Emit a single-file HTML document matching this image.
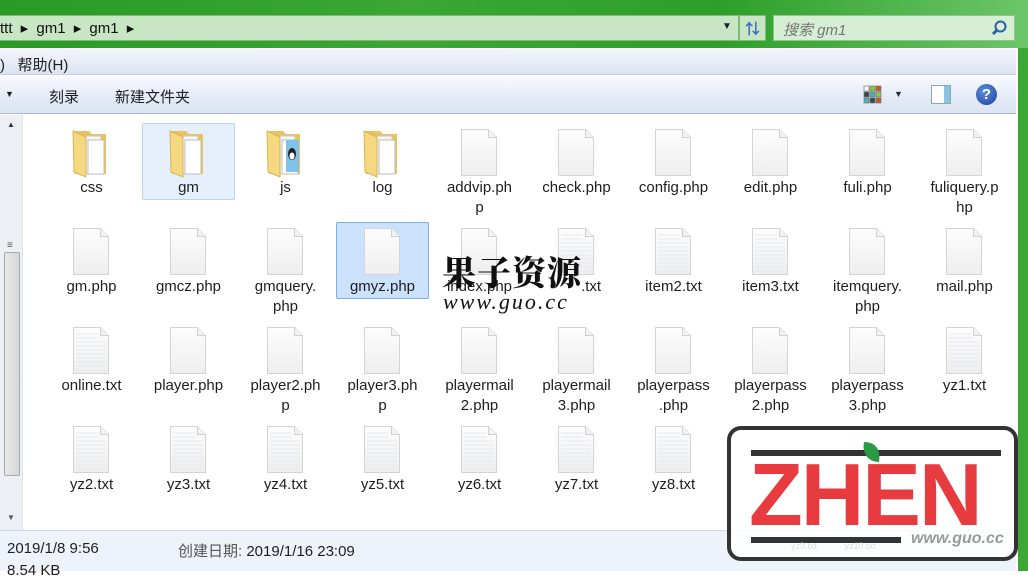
<!DOCTYPE html>
<html><head><meta charset="utf-8"><style>
*{margin:0;padding:0;box-sizing:border-box}
body{width:1028px;height:571px;overflow:hidden;position:relative;background:#fff;font-family:"Liberation Sans","Noto Sans CJK SC",sans-serif;font-size:15px;color:#1e1e1e}
.abs{position:absolute}
#top{left:0;top:0;width:1028px;height:48px;background:linear-gradient(90deg,#2a9a25,#3aa833 40%,#2d9f28 70%,#6cc56a)}
#addr{left:0;top:15px;width:739px;height:26px;background:#c8e6c4;border:1px solid #7fb97a;border-left:none}
#ref{left:739px;top:15px;width:27px;height:26px;background:#c8e6c4;border:1px solid #7fb97a}
#search{left:773px;top:15px;width:242px;height:26px;background:#d6eed3;border:1px solid #8fc48a;color:#777;font-style:italic;font-size:15px;padding:3px 9px}
#rgreen{left:1018px;top:48px;width:10px;height:523px;background:#3aa833}
#menu{left:0;top:49px;width:1016px;height:26px;background:linear-gradient(#f2f5fb,#dde4f2);border-bottom:1px solid #c5cfe2}
#tool{left:0;top:76px;width:1016px;height:38px;background:linear-gradient(#f8faff,#e6ecf7 50%,#dce5f3);border-bottom:1px solid #a8b8d0}
#sb{left:0;top:115px;width:23px;height:415px;background:#eceff3;border-right:1px solid #dfe3ea}
#thumb{left:4px;top:137px;width:16px;height:224px;background:linear-gradient(90deg,#e8e8e8,#d6d6d6);border:1px solid #a8a8a8;border-radius:2px}
#status{left:0;top:530px;width:1016px;height:41px;background:#eef3fb;border-top:1px solid #c9d6ea;font-size:15px}
.cell{position:absolute;width:97px;height:99px;text-align:center}
.cell svg{position:absolute;left:27px;top:6px}
.lbl{position:absolute;left:0;top:56px;width:97px;line-height:20px}
.sel{position:absolute;left:2px;top:1px;width:93px;height:77px;background:#e6f0fc;border:1px solid #b8d4f3;border-radius:2px}
.sel2{background:#cce1fb;border-color:#7fb0ea}
</style></head><body>
<svg width="0" height="0" style="position:absolute">
<defs>
<linearGradient id="pg" x1="0" y1="0" x2="0" y2="1"><stop offset="0" stop-color="#fdfdfd"/><stop offset="1" stop-color="#eeeeee"/></linearGradient>
<symbol id="doc" viewBox="0 0 42 50"><path d="M3.5 1.5h27l8 8v38h-35z" fill="url(#pg)" stroke="#d4d4d4"/><path d="M30.5 1.5v8h8" fill="#f2f2f2" stroke="#d0d0d0"/></symbol>
<symbol id="txt" viewBox="0 0 42 50"><path d="M3.5 1.5h27l8 8v38h-35z" fill="url(#pg)" stroke="#d4d4d4"/><path d="M30.5 1.5v8h8" fill="#f2f2f2" stroke="#d0d0d0"/><g stroke="#e6e8ec"><path d="M6 8h22M6 12h22M6 16h30M6 20h30M6 24h30M6 28h30M6 32h30M6 36h30M6 40h30M6 44h30"/></g></symbol>
<symbol id="fold" viewBox="0 0 42 50"><path d="M5 3h14l3 3h14v40H5z" fill="#e9c35c"/><path d="M13 8h18v38H13z" fill="#f6f6f6" stroke="#c8c8c8"/><path d="M18 12h16v34H18z" fill="#fff" stroke="#bcbcbc"/><path d="M3 3l13 6v40L4 44z" fill="#f5d880" stroke="#d8b552"/></symbol>
</defs></svg>
<div id="top" class="abs"></div>
<div id="addr" class="abs"><span class="abs" style="left:0;top:3px;font-size:15px;color:#111;word-spacing:4px">ttt &#9656; gm1 &#9656; gm1 &#9656;</span><span class="abs" style="left:722px;top:5px;font-size:10px;color:#123">&#9660;</span></div>
<div id="ref" class="abs"><span class="abs" style="left:5px;top:2px;color:#3a6fc0;font-size:15px;font-weight:bold">&#8645;</span></div>
<div id="search" class="abs">搜索 gm1<svg class="abs" style="left:217px;top:4px" width="16" height="16"><circle cx="9.5" cy="6.5" r="5" fill="none" stroke="#2d5ea8" stroke-width="2"/><path d="M6 10l-4 4" stroke="#2d5ea8" stroke-width="3"/></svg></div>
<div id="rgreen" class="abs"></div>
<div id="menu" class="abs"><span class="abs" style="left:0;top:5px">)&nbsp;&nbsp; 帮助(H)</span></div>
<div id="tool" class="abs"><span class="abs" style="left:5px;top:13px;font-size:9px">&#9660;</span><span class="abs" style="left:49px;top:10px">刻录</span><span class="abs" style="left:115px;top:10px">新建文件夹</span>
<svg class="abs" style="left:863px;top:9px" width="20" height="20"><g fill="#fff" stroke="#777" stroke-width=".7"><rect x="1" y="1" width="5" height="5"/><rect x="7" y="1" width="5" height="5" fill="#8c4"/><rect x="13" y="1" width="5" height="5" fill="#c52"/><rect x="1" y="7" width="5" height="5" fill="#345"/><rect x="7" y="7" width="5" height="5" fill="#5ab"/><rect x="13" y="7" width="5" height="5" fill="#8c4"/><rect x="1" y="13" width="5" height="5" fill="#5ab"/><rect x="7" y="13" width="5" height="5" fill="#345"/><rect x="13" y="13" width="5" height="5" fill="#c52"/></g></svg>
<span class="abs" style="left:894px;top:13px;font-size:9px;color:#234">&#9660;</span>
<div class="abs" style="left:931px;top:9px;width:20px;height:19px;background:#fff;border:1px solid #8aa"><div class="abs" style="right:0;top:0;width:6px;height:17px;background:#8cc3e0"></div></div>
<div class="abs" style="left:976px;top:8px;width:21px;height:21px;border-radius:50%;background:radial-gradient(circle at 40% 35%,#5b8fe0,#1c3f99);color:#fff;font-weight:bold;font-size:15px;text-align:center;line-height:21px">?</div></div>
<div id="sb" class="abs"><span class="abs" style="left:7px;top:5px;font-size:8px;color:#333">&#9650;</span><div id="thumb" class="abs"></div><span class="abs" style="left:7px;top:125px;font-size:10px;color:#555">&#8801;</span><span class="abs" style="left:7px;top:398px;font-size:8px;color:#555">&#9660;</span></div>

<div class="cell" style="left:43px;top:122px"><svg width="42" height="50"><use href="#fold"/></svg><div class="lbl">css</div></div>
<div class="cell" style="left:140px;top:122px"><div class="sel"></div><svg width="42" height="50"><use href="#fold"/></svg><div class="lbl">gm</div></div>
<div class="cell" style="left:237px;top:122px"><svg width="42" height="50"><use href="#fold"/><rect x="22" y="12" width="13" height="32" fill="#7fc3ea"/><ellipse cx="28" cy="26" rx="4" ry="6" fill="#222"/><ellipse cx="28" cy="28" rx="2.5" ry="3.5" fill="#fff"/></svg><div class="lbl">js</div></div>
<div class="cell" style="left:334px;top:122px"><svg width="42" height="50"><use href="#fold"/></svg><div class="lbl">log</div></div>
<div class="cell" style="left:431px;top:122px"><svg width="42" height="50"><use href="#doc"/></svg><div class="lbl">addvip.ph<br>p</div></div>
<div class="cell" style="left:528px;top:122px"><svg width="42" height="50"><use href="#doc"/></svg><div class="lbl">check.php</div></div>
<div class="cell" style="left:625px;top:122px"><svg width="42" height="50"><use href="#doc"/></svg><div class="lbl">config.php</div></div>
<div class="cell" style="left:722px;top:122px"><svg width="42" height="50"><use href="#doc"/></svg><div class="lbl">edit.php</div></div>
<div class="cell" style="left:819px;top:122px"><svg width="42" height="50"><use href="#doc"/></svg><div class="lbl">fuli.php</div></div>
<div class="cell" style="left:916px;top:122px"><svg width="42" height="50"><use href="#doc"/></svg><div class="lbl">fuliquery.p<br>hp</div></div>

<div class="cell" style="left:43px;top:221px"><svg width="42" height="50"><use href="#doc"/></svg><div class="lbl">gm.php</div></div>
<div class="cell" style="left:140px;top:221px"><svg width="42" height="50"><use href="#doc"/></svg><div class="lbl">gmcz.php</div></div>
<div class="cell" style="left:237px;top:221px"><svg width="42" height="50"><use href="#doc"/></svg><div class="lbl">gmquery.<br>php</div></div>
<div class="cell" style="left:334px;top:221px"><div class="sel sel2"></div><svg width="42" height="50"><use href="#doc"/></svg><div class="lbl">gmyz.php</div></div>
<div class="cell" style="left:431px;top:221px"><svg width="42" height="50"><use href="#doc"/></svg><div class="lbl">index.php</div></div>
<div class="cell" style="left:528px;top:221px"><svg width="42" height="50"><use href="#txt"/></svg><div class="lbl">&nbsp;&nbsp;&nbsp;&nbsp;&nbsp;&nbsp;&nbsp;.txt</div></div>
<div class="cell" style="left:625px;top:221px"><svg width="42" height="50"><use href="#txt"/></svg><div class="lbl">item2.txt</div></div>
<div class="cell" style="left:722px;top:221px"><svg width="42" height="50"><use href="#txt"/></svg><div class="lbl">item3.txt</div></div>
<div class="cell" style="left:819px;top:221px"><svg width="42" height="50"><use href="#doc"/></svg><div class="lbl">itemquery.<br>php</div></div>
<div class="cell" style="left:916px;top:221px"><svg width="42" height="50"><use href="#doc"/></svg><div class="lbl">mail.php</div></div>

<div class="cell" style="left:43px;top:320px"><svg width="42" height="50"><use href="#txt"/></svg><div class="lbl">online.txt</div></div>
<div class="cell" style="left:140px;top:320px"><svg width="42" height="50"><use href="#doc"/></svg><div class="lbl">player.php</div></div>
<div class="cell" style="left:237px;top:320px"><svg width="42" height="50"><use href="#doc"/></svg><div class="lbl">player2.ph<br>p</div></div>
<div class="cell" style="left:334px;top:320px"><svg width="42" height="50"><use href="#doc"/></svg><div class="lbl">player3.ph<br>p</div></div>
<div class="cell" style="left:431px;top:320px"><svg width="42" height="50"><use href="#doc"/></svg><div class="lbl">playermail<br>2.php</div></div>
<div class="cell" style="left:528px;top:320px"><svg width="42" height="50"><use href="#doc"/></svg><div class="lbl">playermail<br>3.php</div></div>
<div class="cell" style="left:625px;top:320px"><svg width="42" height="50"><use href="#doc"/></svg><div class="lbl">playerpass<br>.php</div></div>
<div class="cell" style="left:722px;top:320px"><svg width="42" height="50"><use href="#doc"/></svg><div class="lbl">playerpass<br>2.php</div></div>
<div class="cell" style="left:819px;top:320px"><svg width="42" height="50"><use href="#doc"/></svg><div class="lbl">playerpass<br>3.php</div></div>
<div class="cell" style="left:916px;top:320px"><svg width="42" height="50"><use href="#txt"/></svg><div class="lbl">yz1.txt</div></div>

<div class="cell" style="left:43px;top:419px"><svg width="42" height="50"><use href="#txt"/></svg><div class="lbl">yz2.txt</div></div>
<div class="cell" style="left:140px;top:419px"><svg width="42" height="50"><use href="#txt"/></svg><div class="lbl">yz3.txt</div></div>
<div class="cell" style="left:237px;top:419px"><svg width="42" height="50"><use href="#txt"/></svg><div class="lbl">yz4.txt</div></div>
<div class="cell" style="left:334px;top:419px"><svg width="42" height="50"><use href="#txt"/></svg><div class="lbl">yz5.txt</div></div>
<div class="cell" style="left:431px;top:419px"><svg width="42" height="50"><use href="#txt"/></svg><div class="lbl">yz6.txt</div></div>
<div class="cell" style="left:528px;top:419px"><svg width="42" height="50"><use href="#txt"/></svg><div class="lbl">yz7.txt</div></div>
<div class="cell" style="left:625px;top:419px"><svg width="42" height="50"><use href="#txt"/></svg><div class="lbl">yz8.txt</div></div>

<div id="status" class="abs"><span class="abs" style="left:7px;top:9px">2019/1/8 9:56</span><span class="abs" style="left:178px;top:9px"><span style="color:#555">创建日期:</span> 2019/1/16 23:09</span><span class="abs" style="left:7px;top:31px">8.54 KB</span></div>

<div class="abs" style="left:442px;top:252px;font-family:'Noto Serif CJK SC','WenQuanYi Zen Hei',serif;font-weight:900;font-size:34px;line-height:38px;color:#111;letter-spacing:1px">果子资源</div>
<div class="abs" style="left:443px;top:290px;font-family:'Liberation Serif',serif;font-style:italic;font-size:22px;line-height:24px;color:#111;letter-spacing:2px">www.guo.cc</div>

<div class="abs" style="left:727px;top:426px;width:291px;height:135px;background:rgba(255,255,255,.85);border:4px solid #333;border-radius:14px">
<div class="abs" style="left:20px;top:20px;width:250px;height:6px;background:#333"></div>
<div class="abs" style="left:20px;top:107px;width:150px;height:6px;background:#333"></div>
<svg class="abs" style="left:130px;top:10px" width="22" height="26"><path d="M3 2c12 0 17 8 15 20C6 22 1 12 3 2z" fill="#2a9a46"/></svg>
<div class="abs" style="left:18px;top:20px;font-family:'Liberation Sans',sans-serif;font-weight:bold;font-size:88px;line-height:90px;color:#e83b3f;letter-spacing:-2px">ZHEN</div>
<div class="abs" style="left:60px;top:111px;font-size:9px;color:#ddd">yz9.txt&nbsp;&nbsp;&nbsp;&nbsp;&nbsp;&nbsp;&nbsp;&nbsp;&nbsp;&nbsp;&nbsp;yz10.txt</div>
<div class="abs" style="left:180px;top:100px;font-family:'Liberation Sans',sans-serif;font-weight:bold;font-style:italic;font-size:16px;color:#999">www.guo.cc</div>
</div>
</body></html>
